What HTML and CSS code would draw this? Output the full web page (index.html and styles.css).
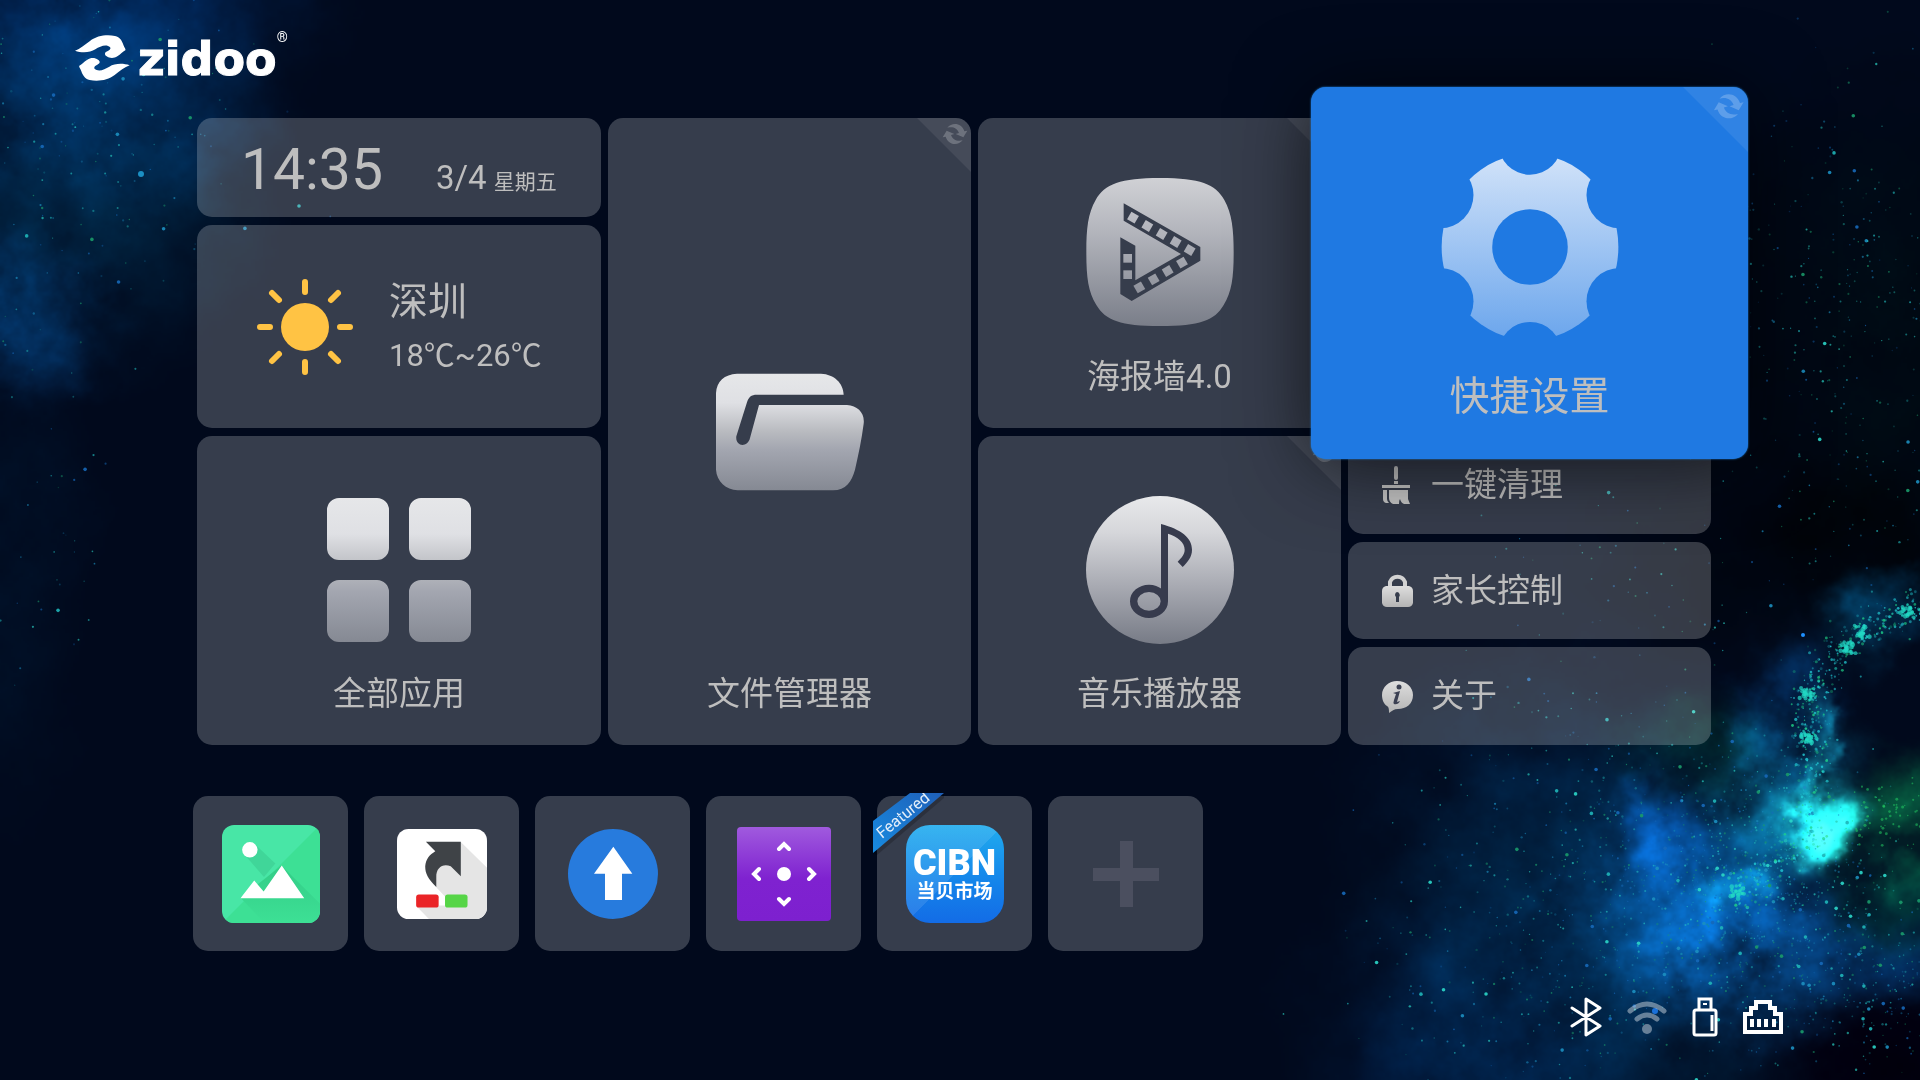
FILE: index.html
```
<!DOCTYPE html>
<html lang="zh-CN">
<head>
<meta charset="utf-8">
<title>zidoo</title>
<link rel="stylesheet" href="styles.css">
</head>
<body>
<canvas id="sky" class="sky" width="1920" height="1080"></canvas>

<!-- shared gradients and the corner fold -->
<svg class="defs" width="0" height="0" aria-hidden="true">
  <defs>
    <linearGradient id="silver" x1="0" y1="0" x2="0" y2="1">
      <stop offset="0" stop-color="#e6e7e9"/>
      <stop offset=".25" stop-color="#dfe0e4"/>
      <stop offset=".5" stop-color="#b8babf"/>
      <stop offset=".65" stop-color="#a3a6b0"/>
      <stop offset="1" stop-color="#858993"/>
    </linearGradient>
    <linearGradient id="steel" x1="0" y1="0" x2="0" y2="1">
      <stop offset="0" stop-color="#d0d1d5"/>
      <stop offset=".35" stop-color="#b4b6bd"/>
      <stop offset="1" stop-color="#7a7e89"/>
    </linearGradient>
    <linearGradient id="disc" x1="0" y1="0" x2="0" y2="1">
      <stop offset="0" stop-color="#e8e9eb"/>
      <stop offset=".25" stop-color="#d5d6da"/>
      <stop offset=".6" stop-color="#a9abb3"/>
      <stop offset="1" stop-color="#777b86"/>
    </linearGradient>
    <linearGradient id="ice" x1="0" y1="0" x2="0" y2="1">
      <stop offset="0" stop-color="#d2e3f9"/>
      <stop offset="1" stop-color="#6aa5ec"/>
    </linearGradient>
    <linearGradient id="grey" x1="0" y1="0" x2="0" y2="1">
      <stop offset="0" stop-color="#dedede"/>
      <stop offset="1" stop-color="#b4b4b4"/>
    </linearGradient>
    <symbol id="fold" viewBox="951 52 162 162">
      <path fill="#fff" fill-opacity=".08" d="M951 52H1113V214Z"/>
      <g fill="#fff" fill-opacity=".22">
        <path id="turn" d="M1042 81C1056 64 1085 66 1093 92L1102 90L1090 110L1067 100L1077 97C1072 82 1058 77 1042 81Z"/>
        <use href="#turn" transform="rotate(180 1065 100)"/>
      </g>
    </symbol>
  </defs>
</svg>

<header class="header">
  <svg class="mark" viewBox="105 75 165 136">
    <g fill="#fff">
      <path id="half" d="M105 121C120 116 135 103 150 92C170 76 200 72 225 77C240 80 246 92 250 103C253 112 258 116 256 120C248 124 242 132 232 138C222 145 208 144 200 138C192 133 194 126 202 123C214 118 214 110 204 107C192 103 178 110 166 117C150 127 125 128 105 121Z"/>
      <use href="#half" transform="rotate(180 187 143)"/>
    </g>
  </svg>
  <span class="brand">zidoo</span><sup class="reg">®</sup>
</header>

<main class="grid">
  <div class="tile clock">
    <span class="time">14:35</span>
    <span class="date">3/4</span>
    <span class="week">星期五</span>
  </div>

  <div class="tile weather">
    <svg class="sun" viewBox="-48 -48 96 96">
      <circle r="24" fill="#ffc344"/>
      <g stroke="#ffc344" stroke-width="6" stroke-linecap="round">
        <path d="M0 -45V-35M0 35V45M-45 0H-35M35 0H45M-33 -34L-26 -27M26 27L33 34M33 -34L26 -27M-26 27L-33 34"/>
      </g>
    </svg>
    <div>
      <div class="city">深圳</div>
      <div class="temp">18℃~26℃</div>
    </div>
  </div>

  <button class="tile app apps" type="button">
    <svg class="icon" viewBox="0 0 148 148">
      <path fill="url(#silver)" d="M14 2H52A12 12 0 0 1 64 14V52A12 12 0 0 1 52 64H14A12 12 0 0 1 2 52V14A12 12 0 0 1 14 2ZM96 2H134A12 12 0 0 1 146 14V52A12 12 0 0 1 134 64H96A12 12 0 0 1 84 52V14A12 12 0 0 1 96 2ZM14 84H52A12 12 0 0 1 64 96V134A12 12 0 0 1 52 146H14A12 12 0 0 1 2 134V96A12 12 0 0 1 14 84ZM96 84H134A12 12 0 0 1 146 96V134A12 12 0 0 1 134 146H96A12 12 0 0 1 84 134V96A12 12 0 0 1 96 84Z"/>
    </svg>
    <span class="label">全部应用</span>
  </button>

  <button class="tile app files" type="button">
    <svg class="fold"><use href="#fold"/></svg>
    <svg class="icon" viewBox="345 775 444 444">
      <path fill="url(#silver)" d="M408 822H660C700 824 727 850 728 885H468C450 885 443 892 438 908L406 1010C402 1042 440 1045 447 1015L474 916H738C770 918 792 940 788 972C782 1020 772 1065 762 1110C752 1145 735 1172 696 1172H410C375 1170 347 1145 345 1110V880C347 845 370 824 408 822Z"/>
    </svg>
    <span class="label">文件管理器</span>
  </button>

  <button class="tile app poster" type="button">
    <svg class="fold"><use href="#fold"/></svg>
    <svg class="icon" viewBox="347 204 444 444">
      <mask id="film" maskUnits="userSpaceOnUse" x="340" y="200" width="460" height="460">
        <rect x="340" y="200" width="460" height="460" fill="#fff"/>
        <path fill="#000" d="M460 280L690 411V452L484 573L450 552V382L495 407V511L632 432L460 332Z"/>
        <g fill="#fff">
          <rect x="475" y="310" width="26" height="26" transform="rotate(30 488 323)"/>
          <rect x="518" y="335" width="26" height="26" transform="rotate(30 531 348)"/>
          <rect x="561" y="359" width="26" height="26" transform="rotate(30 574 372)"/>
          <rect x="603" y="383" width="26" height="26" transform="rotate(30 616 396)"/>
          <rect x="645" y="407" width="26" height="26" transform="rotate(30 658 420)"/>
          <rect x="622" y="445" width="26" height="26" transform="rotate(-30 635 458)"/>
          <rect x="579" y="470" width="26" height="26" transform="rotate(-30 592 483)"/>
          <rect x="537" y="495" width="26" height="26" transform="rotate(-30 550 508)"/>
          <rect x="494" y="519" width="26" height="26" transform="rotate(-30 507 532)"/>
          <rect x="459" y="432" width="26" height="26"/>
          <rect x="459" y="481" width="26" height="26"/>
        </g>
      </mask>
      <path fill="url(#steel)" mask="url(#film)" d="M569 204C690 204 735 222 762 270C785 310 790 360 790 426C790 500 785 545 760 585C732 632 690 648 569 648C450 648 407 632 378 585C353 545 348 500 348 426C348 355 353 310 376 270C403 222 450 204 569 204Z"/>
    </svg>
    <span class="label">海报墙4.0</span>
  </button>

  <button class="tile app music" type="button">
    <svg class="fold"><use href="#fold"/></svg>
    <svg class="icon" viewBox="105 137 444 444">
      <circle cx="327" cy="359" r="222" fill="url(#disc)"/>
      <path fill="#373b4d" d="M330 221C390 237 423 262 423 298C423 320 410 335 395 350L380 334C392 322 401 312 401 298C401 275 380 260 351 250V453H330Z"/>
      <ellipse cx="294" cy="453" rx="46" ry="39" fill="none" stroke="#373b4d" stroke-width="22"/>
    </svg>
    <span class="label">音乐播放器</span>
  </button>

  <button class="tile app settings focused" type="button">
    <svg class="fold"><use href="#fold"/></svg>
    <svg class="icon" viewBox="443 258 548 548">
      <mask id="teeth" maskUnits="userSpaceOnUse" x="440" y="250" width="560" height="570">
        <ellipse cx="717" cy="532" rx="269" ry="283" fill="#fff"/>
        <circle cx="717" cy="532" r="115" fill="#000"/>
        <circle cx="717" cy="216" r="96" fill="#000"/>
        <circle cx="717" cy="856" r="96" fill="#000"/>
        <circle cx="990" cy="374" r="101" fill="#000"/>
        <circle cx="990" cy="697" r="101" fill="#000"/>
        <circle cx="444" cy="374" r="101" fill="#000"/>
        <circle cx="444" cy="697" r="101" fill="#000"/>
      </mask>
      <rect x="443" y="250" width="548" height="570" fill="url(#ice)" mask="url(#teeth)"/>
    </svg>
    <span class="label">快捷设置</span>
  </button>

  <div class="list">
    <button class="tile row" type="button">
      <svg class="small" viewBox="0 0 32 38">
        <g fill="#c4c4c4">
          <rect x="12" y="0" width="4" height="14" rx="2"/>
          <rect x="12" y="15" width="4" height="3"/>
          <rect x="0" y="19" width="28" height="3"/>
          <path d="M1 24H5V33Q5 35 7 37H4Q1 36 1 33ZM7 24H26V33L28 38H22Q19 37 18 33Q17 34 17 38H11Q7 36 7 32Z"/>
        </g>
      </svg>
      <span>一键清理</span>
    </button>
    <button class="tile row" type="button">
      <svg class="small" viewBox="0 0 32 38">
        <path fill="none" stroke="#d2d2d2" stroke-width="4" d="M8 17V10A8 8 0 0 1 23 10V17"/>
        <path fill="url(#grey)" fill-rule="evenodd" d="M4 14H27Q31 15 31 19V31Q30 35 26 35H5Q1 35 0 31V19Q0 15 4 14ZM15 20A3 3 0 0 0 14 25L14 30H17L17 25A3 3 0 0 0 15 20Z"/>
      </svg>
      <span>家长控制</span>
    </button>
    <button class="tile row" type="button">
      <svg class="small" viewBox="0 0 32 38">
        <path fill="url(#grey)" d="M15 4C24 4 31 10 31 18C31 27 24 32 16 32C12 32 10 34 7 36C7 33 7 30 5 29C2 27 0 23 0 18C0 10 7 4 15 4Z"/>
        <circle cx="17" cy="10" r="2.500" fill="#3b4052"/>
        <path fill="#3b4052" d="M11 16L18 14L15 25L18 24Q16 28 12 27Q11 26 12 23L14 17Z"/>
      </svg>
      <span>关于</span>
    </button>
  </div>
</main>

<nav class="dock">
  <button class="tile" type="button" aria-label="Gallery">
    <svg width="98" height="98" viewBox="123 135 292 292">
      <clipPath id="gclip"><rect x="123" y="135" width="292" height="292" rx="36"/></clipPath>
      <linearGradient id="gshade" x1="0" y1="0" x2="0" y2="1">
        <stop offset="0" stop-color="#33cc87"/>
        <stop offset="1" stop-color="#3de095"/>
      </linearGradient>
      <g clip-path="url(#gclip)">
        <rect x="123" y="135" width="292" height="292" fill="#48e6a6"/>
        <path fill="#3de095" d="M415 135V427H123Z"/>
        <path fill="#40d699" d="M222 193L282 250L248 290L196 230Z"/>
        <path fill="url(#gshade)" d="M300 256L415 370V427H250L178 352Z"/>
      </g>
      <circle cx="206" cy="209" r="23" fill="#fff"/>
      <path fill="#fff" d="M178 353L219 300L247 333L301 256L368 353Z"/>
    </svg>
  </button>
  <button class="tile" type="button" aria-label="Shortcut">
    <svg width="90" height="90" viewBox="648 147 268 268">
      <clipPath id="sclip"><rect x="648" y="147" width="268" height="268" rx="34"/></clipPath>
      <g clip-path="url(#sclip)">
        <rect x="648" y="147" width="268" height="268" fill="#fff"/>
        <path fill="#e5e5e5" d="M838 186L920 266V420H748L708 379L790 365L764 320L740 260Z"/>
        <path fill="#fff" d="M738 292L793 350V375H766V350Z"/>
      </g>
      <path fill="#3f4347" d="M734 185H838V288L808 258C785 248 764 262 765 290V320C740 295 732 280 732 258C734 235 745 224 762 213Z"/>
      <rect x="705" y="342" width="67" height="39" rx="8" fill="#ea2427"/>
      <rect x="791" y="342" width="67" height="39" rx="8" fill="#56d547"/>
    </svg>
  </button>
  <button class="tile" type="button" aria-label="Update">
    <svg width="90" height="90" viewBox="1161 144 270 270">
      <circle cx="1296" cy="279" r="135" fill="#277bdd"/>
      <path fill="#fff" d="M1297 197L1354 278H1323V357H1272V278H1239Z"/>
    </svg>
  </button>
  <button class="tile" type="button" aria-label="Remote">
    <svg width="94" height="94" viewBox="0 0 94 94">
      <linearGradient id="violet" x1="0" y1="0" x2="0" y2="1">
        <stop offset="0" stop-color="#a05ade"/>
        <stop offset=".55" stop-color="#7f22d0"/>
        <stop offset="1" stop-color="#7d20cf"/>
      </linearGradient>
      <rect width="94" height="94" rx="4" fill="url(#violet)"/>
      <circle cx="47" cy="47" r="7" fill="#fff"/>
      <path fill="none" stroke="#fff" stroke-width="4" stroke-linecap="round" d="M42 22L47 17L52 22M42 72L47 77L52 72M22 42L17 47L22 52M72 42L77 47L72 52"/>
    </svg>
  </button>
  <button class="tile" type="button">
    <span class="cibn"><b>CIBN</b><i>当贝市场</i></span>
    <svg class="ribbon" width="72" height="64" viewBox="0 0 72 64">
      <linearGradient id="band" x1="0" y1="1" x2="1" y2="0">
        <stop offset="0" stop-color="#178be0"/>
        <stop offset="1" stop-color="#1f5fb8"/>
      </linearGradient>
      <path fill="#000" fill-opacity=".2" d="M0 60L71 0V5L4 62Z"/>
      <path fill="url(#band)" d="M0 28L37 0H71L0 60Z"/>
      <text class="featured" transform="translate(9 46) rotate(-39)">Featured</text>
    </svg>
  </button>
  <button class="tile" type="button" aria-label="Add">
    <svg width="66" height="66" viewBox="0 0 66 66">
      <path fill="#4b4f5f" d="M27 0H40V27H66V40H40V66H27V40H0V27H27Z"/>
    </svg>
  </button>
</nav>

<footer class="status">
  <svg width="32" height="40" viewBox="0 0 32 40">
    <path fill="none" stroke="#fff" stroke-width="3" stroke-linejoin="round" stroke-linecap="round" d="M2 11L30 29L16 38V2L30 11L2 29"/>
  </svg>
  <svg width="40" height="40" viewBox="0 0 40 40" opacity=".4">
    <path fill="none" stroke="#fff" stroke-width="5" stroke-linecap="round" d="M3 14Q20 0 37 14M10 22Q20 14 30 22"/>
    <circle cx="20" cy="32" r="5" fill="#fff"/>
  </svg>
  <svg width="26" height="40" viewBox="0 0 26 40">
    <path fill="none" stroke="#fff" stroke-width="3" d="M7 12V2H19V12M4 13H22Q24 13 24 15V36Q24 38 22 38H4Q2 38 2 36V15Q2 13 4 13ZM20 18V34"/>
    <path fill="none" stroke="#fff" stroke-width="2" d="M11 7H15"/>
  </svg>
  <svg width="40" height="40" viewBox="0 0 40 40">
    <path fill="none" stroke="#fff" stroke-width="4" d="M2 35V17H8V11H13V5H27V11H32V17H38V35ZM9 22V30M16 22V30M23 22V30M31 22V30"/>
  </svg>
</footer>

<script src="sky.js"></script>
</body>
</html>
```
FILE: styles.css
```
* { box-sizing:border-box; }
body { margin:0; background:#01091c; color:#bebebe; font-family:Roboto,"Noto Sans CJK SC",sans-serif; }
button { border:0; padding:0; color:inherit; font:inherit; cursor:pointer; }
svg { display:block; flex:none; }
.sky { position:fixed; top:0; left:0; z-index:-1; width:100%; height:100%; object-fit:cover; }
.defs { position:absolute; }

.header { display:flex; align-items:flex-start; height:118px; padding:30px 75px 0; color:#fff; }
.mark { width:55px; height:46px; margin:5px 8px 0 0; }
.brand { font:bold 46px/58px "DejaVu Sans",sans-serif; -webkit-text-stroke:1px #fff; }
.reg { font-size:14px; line-height:14px; }

.grid { display:grid; grid-template-columns:404fr 363fr 363fr 363fr; grid-template-rows:99px 203px 309px; gap:8px 7px; padding:0 209px 0 197px; }
.tile { position:relative; border-radius:15px; background:rgba(255,255,255,.213); }

.clock { display:flex; align-items:baseline; padding:20px 0 0 44px; line-height:64px; }
.time { font-size:57px; }
.date { margin-left:53px; font-size:33px; }
.week { margin-left:7px; font-size:21px; }

.weather { display:flex; align-items:center; gap:36px; padding-left:60px; }
.sun { width:96px; height:96px; }
.city { padding-top:4px; font-size:39px; line-height:54px; }
.temp { font-size:31px; line-height:54px; }

.app { display:flex; flex-direction:column; align-items:center; justify-content:space-between; padding:60px 0 27px; }
.icon { width:148px; height:148px; }
.label { font-size:33px; line-height:48px; }
.fold { position:absolute; top:0; right:0; width:54px; height:54px; border-top-right-radius:15px; }
.files { grid-area:1 / 2 / 4 / 3; padding-top:75px; }
.files .icon { margin:auto 0; }
.poster { grid-area:1 / 3 / 3 / 4; }
.music { grid-area:3 / 3; }
.apps { grid-area:3 / 1; }
.settings { grid-area:1 / 4 / 3 / 5; }

/* focused tile grows over its neighbours */
.focused { z-index:2; margin:-31px -37px; padding:70px 0 34px; background:#1f79e2; box-shadow:0 0 2px #1f8ae8,0 6px 76px rgba(0,0,0,.65); }
.focused .icon { width:180px; height:180px; overflow:visible; }
.focused .label { font-size:40px; line-height:56px; }
.focused .fold { width:65px; height:65px; }

.list { grid-area:3 / 4; display:flex; flex-direction:column; gap:8px; }
.row { flex:1; display:flex; align-items:center; gap:17px; padding-left:34px; font-size:33px; line-height:48px; }
.small { width:32px; height:38px; }

.dock { display:flex; gap:16px; margin-top:51px; padding-left:193px; }
.dock .tile { display:flex; align-items:center; justify-content:center; width:155px; height:155px; }
.cibn { display:flex; flex-direction:column; align-items:center; width:98px; height:98px; padding-top:20px; border-radius:24px; color:#fff; background:linear-gradient(135deg,rgba(255,255,255,.1) 50%,transparent 50%),linear-gradient(#20acee,#1483ea 60%,#136ce6); }
.cibn b { font-size:36px; font-weight:900; line-height:36px; }
.cibn i { font-size:19px; font-style:normal; font-weight:700; line-height:22px; }
.ribbon { position:absolute; top:-3px; left:-4px; }
.featured { font-size:16px; fill:#e4effa; }

.status { display:flex; justify-content:flex-end; gap:25px; margin-top:46px; padding-right:137px; }
```
FILE: sky.js
```
// night sky: nebula clouds from value noise, then scattered stars
var canvas = document.getElementById('sky');
var ctx = canvas.getContext('2d');
var seed = 7;
function rnd() {
	seed = (seed * 16807) % 2147483647;
	return seed / 2147483647;
}
function gauss() { return rnd() + rnd() + rnd() - 1.5; }

var table = [];
for (var i = 0; i < 65536; i++) table.push(rnd());
function cell(x, y) { return table[((y & 255) << 8) | (x & 255)]; }
function noise(x, y) {
	var ix = Math.floor(x), iy = Math.floor(y), fx = x - ix, fy = y - iy;
	fx = fx * fx * (3 - 2 * fx);
	fy = fy * fy * (3 - 2 * fy);
	var a = cell(ix, iy), b = cell(ix + 1, iy), c = cell(ix, iy + 1), d = cell(ix + 1, iy + 1);
	return a + (b - a) * fx + (c - a) * fy + (a - b - c + d) * fx * fy;
}
function fbm(x, y) {
	var s = 0, a = 0.5;
	for (var o = 0; o < 6; o++) { s += a * noise(x, y); x = x * 2 + 17; y = y * 2 + 31; a *= 0.6; }
	return s;
}

// x, y, rx, ry, r, g, b, noise amount
var clouds = [
	[80, -20, 290, 270, 0, 40, 82, 0.5],
	[60, 170, 270, 240, 0, 26, 36, 0.6],
	[0, 320, 150, 120, 2, 36, 66, 0.8],
	[0, 560, 110, 320, 0, 8, 12, 0.8],
	[1900, 330, 260, 330, -2, -4, -16, 0.3],
	[1800, 560, 260, 150, -1, -5, -16, 0.3],
	[1880, 300, 120, 220, 0, 8, 10, 0.9],
	[1620, 940, 330, 270, 0, 28, 40, 0.6],
	[1480, 1060, 230, 230, 0, 20, 40, 0.5],
	[1540, 780, 240, 180, 0, 10, 18, 0.7],
	[1700, 900, 190, 140, 4, 46, 84, 0.9],
	[1740, 960, 160, 110, 4, 44, 80, 0.9],
	[1660, 830, 50, 90, 4, 40, 84, 0.9],
	[1700, 750, 120, 80, 0, 22, 6, 0.9],
	[1780, 800, 110, 110, 6, 70, 80, 0.9],
	[1780, 720, 65, 120, 3, 46, 84, 0.9],
	[1895, 615, 100, 50, 2, 50, 76, 0.9],
	[1850, 645, 60, 60, 2, 40, 56, 0.9],
	[1910, 830, 130, 90, 6, 90, 40, 0.8],
	[1890, 900, 90, 80, 0, 40, 26, 0.8],
	[1890, 970, 100, 60, 2, 30, 56, 0.9],
	[1740, 885, 50, 34, 8, 80, 90, 0.9],
	[1818, 822, 62, 66, 20, 130, 120, 0.8],
	[1822, 830, 40, 46, 70, 330, 300, 0.4],
	[1812, 770, 17, 100, 15, 100, 100, 0.9],
	[1860, 1060, 160, 90, 0, -14, -20, 0.3]
];

var w = 960, h = 540;
var buf = document.createElement('canvas');
buf.width = w;
buf.height = h;
var bctx = buf.getContext('2d');
var img = bctx.createImageData(w, h);
for (var y = 0; y < h; y++) {
	for (var x = 0; x < w; x++) {
		var px = x * 2, py = y * 2, r = 1, g = 9, b = 28;
		if (px < 420 || px > 1180) {
			var n = fbm(px / 70, py / 70);
			var wx = px + (fbm(px / 50 + 40, py / 50) - 0.6) * 60;
			var wy = py + (n - 0.6) * 60;
			var m = Math.max(0, (fbm(px / 60 + 9, py / 60 + 5) - 0.22) * 2);
			for (var k = 0; k < clouds.length; k++) {
				var c = clouds[k];
				var dx = (wx - c[0]) / c[2], dy = (wy - c[1]) / c[3], d = dx * dx + dy * dy;
				if (d >= 1) continue;
				var f = (1 - d) * (1 - d) * (1 - c[7] + c[7] * m);
				r += c[4] * f;
				g += c[5] * f;
				b += c[6] * f;
			}
		}
		var p = (y * w + x) * 4;
		img.data[p] = r;
		img.data[p + 1] = g;
		img.data[p + 2] = b;
		img.data[p + 3] = 255;
	}
}
bctx.putImageData(img, 0, 0);
ctx.drawImage(buf, 0, 0, 1920, 1080);

var tints = ['#1fb5b8', '#1c8fc0', '#2bd6c8', '#1a9a6a', '#1668b8'];
function star(x, y, s, a, tint) {
	ctx.globalAlpha = a;
	ctx.fillStyle = tint || tints[Math.floor(rnd() * tints.length)];
	ctx.beginPath();
	ctx.arc(x, y, s, 0, 7);
	ctx.fill();
}
// cx, cy, spread x, spread y, count
var fields = [
	[90, 120, 170, 170, 190],
	[40, 420, 70, 330, 70],
	[1850, 330, 140, 260, 420],
	[1640, 900, 240, 180, 700],
	[1760, 880, 120, 110, 600],
	[1880, 990, 110, 80, 260],
	[1480, 1000, 150, 110, 60],
	[1640, 620, 160, 140, 90]
];
fields.forEach(function (f) {
	for (var i = 0; i < f[4]; i++) {
		var big = rnd() < 0.06;
		star(f[0] + gauss() * f[2], f[1] + gauss() * f[3], big ? 1.8 : 0.6 + rnd() * 0.6, big ? 0.9 : 0.2 + rnd() * 0.5);
	}
});
// bright filament curling up to the right edge
var spine = [[1920, 605], [1900, 614], [1862, 632], [1835, 655], [1815, 685], [1808, 715], [1809, 740], [1811, 780], [1816, 830], [1786, 860], [1738, 893]];
for (i = 0; i < spine.length - 1; i++) {
	for (var j = 0; j < 55; j++) {
		var t = rnd();
		star(spine[i][0] + (spine[i + 1][0] - spine[i][0]) * t + gauss() * 20,
			spine[i][1] + (spine[i + 1][1] - spine[i][1]) * t + gauss() * 20,
			0.6 + rnd(), 0.2 + rnd() * 0.6, rnd() < 0.35 ? '#1fd487' : '#25d5dd');
	}
}
// knots along the filament
[[1862, 632], [1908, 612], [1808, 737], [1848, 648], [1809, 694], [1738, 892]].forEach(function (k) {
	for (var i = 0; i < 26; i++) star(k[0] + gauss() * 7, k[1] + gauss() * 7, 1 + rnd() * 1.5, 0.7, '#22d8c4');
});
for (i = 0; i < 70; i++) star(1885 + gauss() * 50, 815 + gauss() * 30, 0.6 + rnd(), 0.5, '#25d566');
star(141, 174, 3, 0.9, '#1e9bd0');
star(1655, 1011, 3, 0.9, '#1d78e8');
star(1803, 635, 2, 1, '#1f90ff');
ctx.globalAlpha = 1;
```
